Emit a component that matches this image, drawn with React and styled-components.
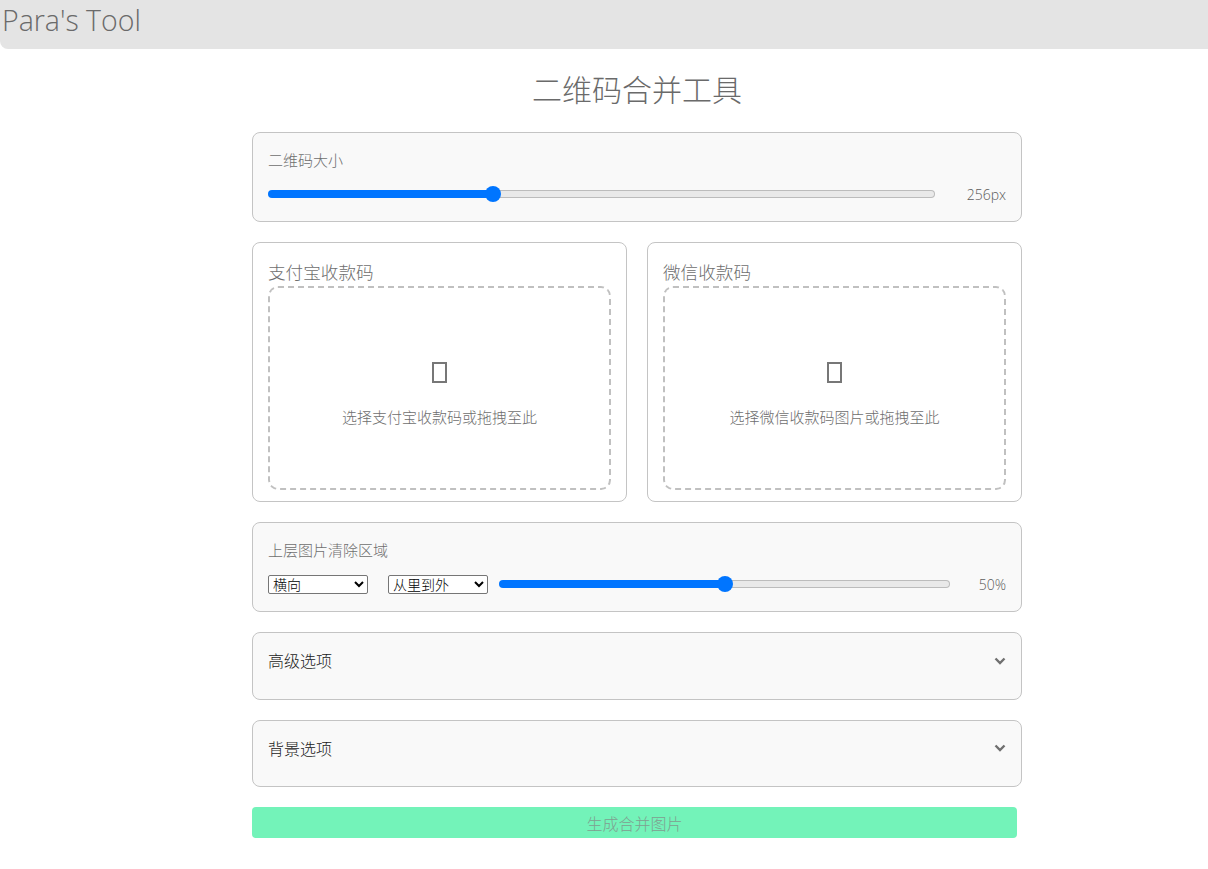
import React, { useState } from "react";
import styled, { createGlobalStyle } from "styled-components";

const FONT = `"Open Sans", "Noto Sans CJK SC", sans-serif`;

const GlobalStyle = createGlobalStyle`
  html, body {
    margin: 0;
    padding: 0;
    background: #fff;
    font-family: ${FONT};
    color: #6e6e6e;
  }
  * { box-sizing: border-box; }
`;

const Header = styled.header`
  height: 49px;
  background: #e4e4e4;
  border-bottom-left-radius: 8px;
  padding-left: 2px;
  font-size: 28.5px;
  font-weight: 300;
  line-height: 41px;
  color: #6a6a6a;
`;

const Main = styled.main`
  width: 770px;
  margin-left: 252px;
  display: flex;
  flex-direction: column;
`;

const Title = styled.h1`
  margin: 21px 0 23px;
  height: 39px;
  font-size: 30px;
  font-weight: 300;
  line-height: 39px;
  text-align: center;
  color: #6a6a6a;
`;

const Card = styled.section`
  background: ${(p) => (p.$plain ? "#fff" : "#f9f9f9")};
  border: 1px solid #c4c4c4;
  border-radius: 8px;
  padding: ${(p) => p.$padding || "15px"};
  height: ${(p) => p.$height}px;
  margin-bottom: 20px;
`;

const Label = styled.div`
  font-size: 15px;
  line-height: 24px;
  font-weight: 300;
  color: #6e6e6e;
  margin-bottom: 10px;
`;

const Row = styled.div`
  display: flex;
  align-items: center;
  height: 24px;
`;

const Range = styled.input.attrs({ type: "range" })`
  -webkit-appearance: none;
  appearance: none;
  display: block;
  flex: 1;
  min-width: 0;
  height: 8px;
  margin: 0;
  border: 1px solid transparent;
  border-radius: 4px;
  outline: none;
  background:
    linear-gradient(#0075ff, #0075ff) 0 0 / var(--fill) 100% no-repeat border-box,
    linear-gradient(#e9e9e9, #e9e9e9) padding-box,
    #bcbcbc border-box;

  &::-webkit-slider-thumb {
    -webkit-appearance: none;
    width: 16px;
    height: 16px;
    border-radius: 50%;
    background: #0075ff;
    border: none;
  }
`;

const Value = styled.span`
  font-size: 14px;
  font-weight: 300;
  color: #5c5c5c;
  margin-left: auto;
  width: ${(p) => p.$width}px;
  text-align: right;
  flex: none;
`;

const UploadRow = styled.div`
  display: grid;
  grid-template-columns: 375px 375px;
  gap: 20px;
`;

const UploadTitle = styled.div`
  font-size: 17.6px;
  font-weight: 300;
  line-height: 24px;
  height: 43px;
  padding-top: 17px;
  color: #6e6e6e;
`;

const DropZone = styled.div`
  height: 204px;
  border: 2px dashed #c0c0c0;
  border-radius: 10px;
  display: flex;
  flex-direction: column;
  align-items: center;
  padding-top: 74px;
`;

const MissingGlyph = styled.span`
  display: block;
  width: 15px;
  height: 21px;
  border: 2px solid #777;
`;

const DropHint = styled.div`
  margin-top: 24px;
  font-size: 15px;
  font-weight: 300;
  line-height: 20px;
  color: #6e6e6e;
`;

const Select = styled.select`
  flex: none;
  width: 100px;
  height: 19px;
  margin-right: ${(p) => p.$gap}px;
  padding: 0;
  font-family: "Liberation Sans", "Noto Sans CJK SC", sans-serif;
  font-size: 14px;
  font-weight: 300;
  color: #000;
  background: #fff;
  border: 1px solid #767676;
  border-radius: 2px;
`;

const FoldHead = styled.div`
  display: flex;
  justify-content: space-between;
  align-items: center;
  height: 24px;
  font-size: 16px;
  font-weight: 300;
  color: #222;
`;

const Chevron = styled.svg`
  width: 12px;
  height: 12px;
  margin-top: ${(p) => p.$offset || 0}px;
  fill: none;
  stroke: #707070;
  stroke-width: 2.4;
`;

const SubmitButton = styled.button`
  width: 765px;
  height: 31px;
  padding: 0;
  border: none;
  border-radius: 4px;
  background: #73f3b9;
  color: #7f9f90;
  font-family: ${FONT};
  font-size: 16px;
  font-weight: 300;
`;

function Fold({ title, height, offset }) {
  return (
    <Card $height={height}>
      <FoldHead>
        <span>{title}</span>
        <Chevron viewBox="0 0 12 12" $offset={offset}>
          <path d="M1.5 3.5 6 8l4.5-4.5" />
        </Chevron>
      </FoldHead>
    </Card>
  );
}

function Upload({ title, hint }) {
  return (
    <Card $plain $height={260} $padding="0 15px">
      <UploadTitle>{title}</UploadTitle>
      <DropZone>
        <MissingGlyph />
        <DropHint>{hint}</DropHint>
      </DropZone>
    </Card>
  );
}

export default function App() {
  const [size, setSize] = useState(256);
  const [clear, setClear] = useState(50);
  const sizeFill = `${((size - 100) / 468) * 100}%`;

  return (
    <>
      <GlobalStyle />
      <Header>Para's Tool</Header>
      <Main>
        <Title>二维码合并工具</Title>
        <Card $height={90} $padding="15px 15px 0">
          <Label>二维码大小</Label>
          <Row>
            <Range
              min={100}
              max={568}
              value={size}
              onChange={(e) => setSize(Number(e.target.value))}
              style={{ "--fill": sizeFill }}
            />
            <Value $width={71}>{size}px</Value>
          </Row>
        </Card>
        <UploadRow>
          <Upload title="支付宝收款码" hint="选择支付宝收款码或拖拽至此" />
          <Upload title="微信收款码" hint="选择微信收款码图片或拖拽至此" />
        </UploadRow>
        <Card $height={90} $padding="15px 15px 0">
          <Label>上层图片清除区域</Label>
          <Row>
            <Select defaultValue="h" $gap={20}>
              <option value="h">横向</option>
              <option value="v">纵向</option>
            </Select>
            <Select defaultValue="in" $gap={11}>
              <option value="in">从里到外</option>
              <option value="out">从外到里</option>
            </Select>
            <Range
              min={0}
              max={100}
              value={clear}
              onChange={(e) => setClear(Number(e.target.value))}
              style={{ "--fill": `${clear}%` }}
            />
            <Value $width={56}>{clear}%</Value>
          </Row>
        </Card>
        <Fold title="高级选项" height={68} offset={2} />
        <Fold title="背景选项" height={67} />
        <SubmitButton disabled>生成合并图片</SubmitButton>
      </Main>
    </>
  );
}
